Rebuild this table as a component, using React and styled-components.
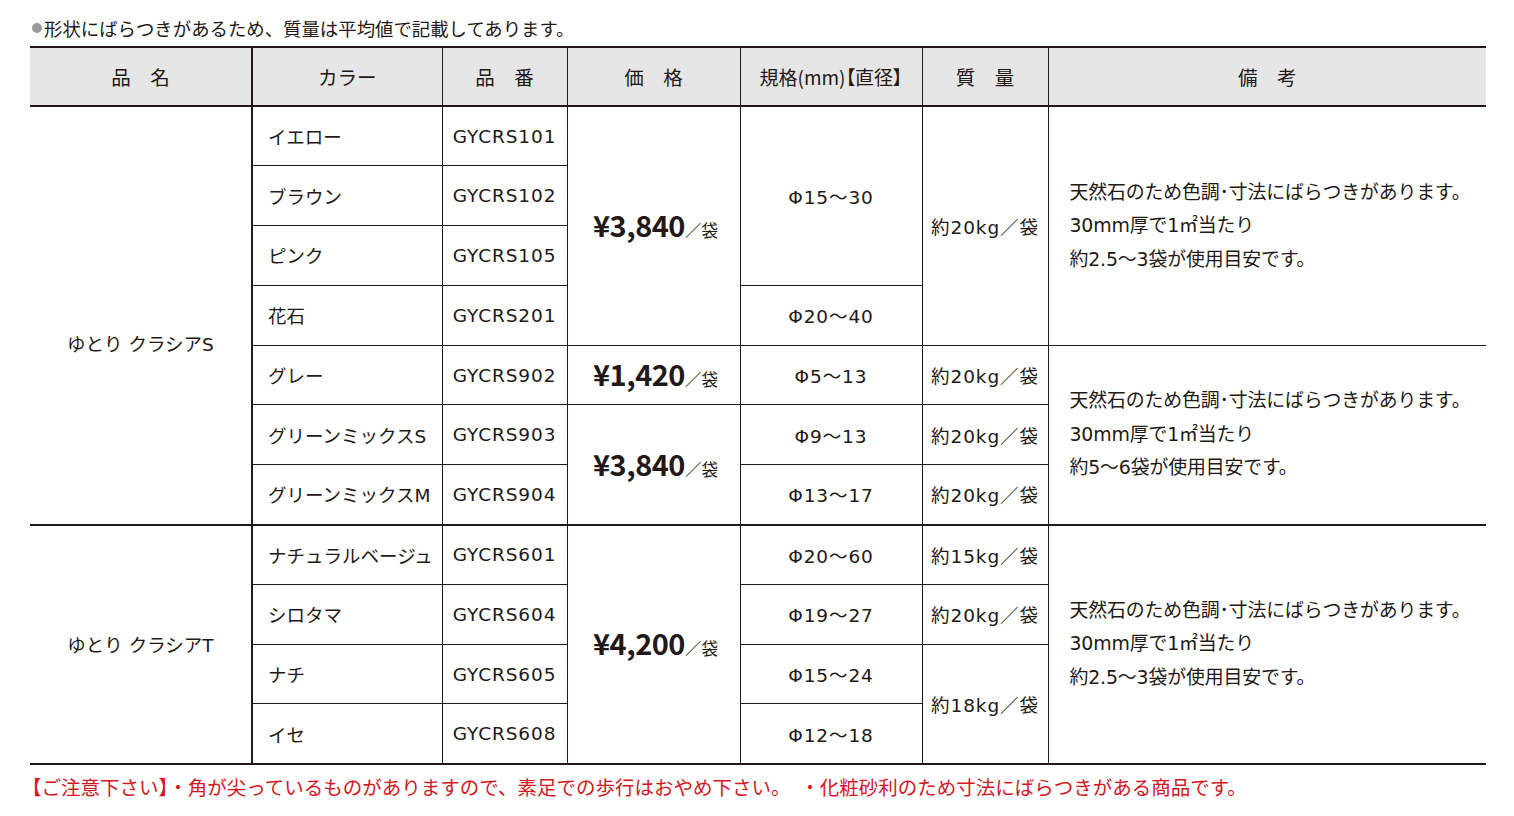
import React from "react";
import styled, { createGlobalStyle, css } from "styled-components";

const Global = createGlobalStyle`
  html, body { margin: 0; padding: 0; background: #ffffff; }
  body { font-family: "Noto Sans CJK JP", "Noto Sans", sans-serif; color: #231815; }
`;

const INK = "#231815";
const LATIN = `"DejaVu Sans", "Noto Sans CJK JP", sans-serif`;

const Page = styled.div`
  width: 1514px;
  padding: 18px 28px 0 30px;
  box-sizing: border-box;
`;

const Caption = styled.p`
  margin: 0 0 8px 2px;
  font-size: 18.4px;
  line-height: 20px;
  display: flex;
  align-items: center;
`;

const Dot = styled.span`
  display: inline-block;
  width: 10px;
  height: 10px;
  border-radius: 50%;
  background: #9a9a9a;
  margin-right: 2px;
`;

const Table = styled.table`
  width: 1456px;
  border-collapse: collapse;
  table-layout: fixed;
  border-top: 2px solid ${INK};
  border-bottom: 2px solid ${INK};
`;

const HeadRow = styled.tr`
  height: 59px;
  background: #e6e6e6;
`;

const BodyRow = styled.tr`
  height: 59.8px;
`;

const HeadCell = styled.th`
  font-weight: 400;
  font-size: 19.5px;
  text-align: center;
  padding: 0;
  border-bottom: 2px solid ${INK};
  border-left: ${(p) => (p.$first ? "none" : `${p.$thick ? 2 : 1}px solid ${INK}`)};
  white-space: nowrap;
  ${(p) =>
    p.$compact &&
    css`
      font-feature-settings: "palt";
      font-size: 19px;
    `}
`;

const Cell = styled.td`
  font-family: ${LATIN};
  font-size: 18.5px;
  padding: ${(p) => (p.$align === "left" ? `0 0 0 ${p.$pad ?? 15}px` : "0")};
  padding-top: ${(p) => (p.$lift ? `${p.$lift}px` : undefined)};
  text-align: ${(p) => p.$align || "center"};
  letter-spacing: ${(p) => (p.$code ? "0.9px" : "normal")};
  vertical-align: middle;
  white-space: nowrap;
  border-top: 1px solid ${INK};
  border-left: ${(p) => (p.$first ? "none" : `${p.$thick ? 2 : 1}px solid ${INK}`)};
  ${(p) =>
    p.$groupEnd &&
    css`
      border-bottom: 2px solid ${INK};
    `}
`;

const Note = styled.div`
  font-size: 18.9px;
  line-height: 33.5px;
  letter-spacing: -0.15px;
  white-space: nowrap;
`;

const Price = styled.span`
  display: inline-flex;
  align-items: baseline;
  padding: 0 0 4px 4px;
  font-family: "Noto Sans CJK JP", sans-serif;
  letter-spacing: normal;
`;

const Yen = styled.span`
  font-size: 29px;
  font-weight: 700;
  letter-spacing: -0.5px;
`;

const Unit = styled.span`
  font-size: 16.5px;
`;

const Footer = styled.p`
  margin: 12px 0 0 -8px;
  font-size: 19.5px;
  line-height: 20px;
  color: #d6161e;
  white-space: pre;
`;

const noteA = ["天然石のため色調･寸法にばらつきがあります。", "30mm厚で1㎡当たり", "約2.5〜3袋が使用目安です。"];
const noteB = ["天然石のため色調･寸法にばらつきがあります。", "30mm厚で1㎡当たり", "約5〜6袋が使用目安です。"];

const Remark = ({ lines }) => (
  <Note>
    {lines.map((l) => (
      <div key={l}>{l}</div>
    ))}
  </Note>
);

const PriceTag = ({ value }) => (
  <Price>
    <Yen>{value}</Yen>
    <Unit>／袋</Unit>
  </Price>
);

export default function App() {
  return (
    <Page>
      <Global />
      <Caption>
        <Dot />
        形状にばらつきがあるため、質量は平均値で記載してあります。
      </Caption>
      <Table>
        <colgroup>
          <col style={{ width: 222 }} />
          <col style={{ width: 190 }} />
          <col style={{ width: 125 }} />
          <col style={{ width: 173 }} />
          <col style={{ width: 182 }} />
          <col style={{ width: 126 }} />
          <col style={{ width: 438 }} />
        </colgroup>
        <thead>
          <HeadRow>
            <HeadCell $first>品　名</HeadCell>
            <HeadCell $thick>カラー</HeadCell>
            <HeadCell>品　番</HeadCell>
            <HeadCell>価　格</HeadCell>
            <HeadCell $compact>規格(mm)【直径】</HeadCell>
            <HeadCell>質　量</HeadCell>
            <HeadCell>備　考</HeadCell>
          </HeadRow>
        </thead>
        <tbody>
          <BodyRow>
            <Cell $first rowSpan={7} $groupEnd $lift={56}>ゆとり クラシアS</Cell>
            <Cell $thick $align="left">イエロー</Cell>
            <Cell $code>GYCRS101</Cell>
            <Cell rowSpan={4}><PriceTag value="¥3,840" /></Cell>
            <Cell $code rowSpan={3}>Φ15〜30</Cell>
            <Cell $code rowSpan={4}>約20kg／袋</Cell>
            <Cell rowSpan={4} $align="left" $pad={21}><Remark lines={noteA} /></Cell>
          </BodyRow>
          <BodyRow>
            <Cell $thick $align="left">ブラウン</Cell>
            <Cell $code>GYCRS102</Cell>
          </BodyRow>
          <BodyRow>
            <Cell $thick $align="left">ピンク</Cell>
            <Cell $code>GYCRS105</Cell>
          </BodyRow>
          <BodyRow>
            <Cell $thick $align="left">花石</Cell>
            <Cell $code>GYCRS201</Cell>
            <Cell $code>Φ20〜40</Cell>
          </BodyRow>
          <BodyRow>
            <Cell $thick $align="left">グレー</Cell>
            <Cell $code>GYCRS902</Cell>
            <Cell><PriceTag value="¥1,420" /></Cell>
            <Cell $code>Φ5〜13</Cell>
            <Cell $code>約20kg／袋</Cell>
            <Cell rowSpan={3} $align="left" $pad={21} $groupEnd><Remark lines={noteB} /></Cell>
          </BodyRow>
          <BodyRow>
            <Cell $thick $align="left">グリーンミックスS</Cell>
            <Cell $code>GYCRS903</Cell>
            <Cell rowSpan={2} $groupEnd><PriceTag value="¥3,840" /></Cell>
            <Cell $code>Φ9〜13</Cell>
            <Cell $code>約20kg／袋</Cell>
          </BodyRow>
          <BodyRow>
            <Cell $thick $align="left" $groupEnd>グリーンミックスM</Cell>
            <Cell $code $groupEnd>GYCRS904</Cell>
            <Cell $code $groupEnd>Φ13〜17</Cell>
            <Cell $code $groupEnd>約20kg／袋</Cell>
          </BodyRow>
          <BodyRow>
            <Cell $first rowSpan={4}>ゆとり クラシアT</Cell>
            <Cell $thick $align="left">ナチュラルベージュ</Cell>
            <Cell $code>GYCRS601</Cell>
            <Cell rowSpan={4}><PriceTag value="¥4,200" /></Cell>
            <Cell $code>Φ20〜60</Cell>
            <Cell $code>約15kg／袋</Cell>
            <Cell rowSpan={4} $align="left" $pad={21}><Remark lines={noteA} /></Cell>
          </BodyRow>
          <BodyRow>
            <Cell $thick $align="left">シロタマ</Cell>
            <Cell $code>GYCRS604</Cell>
            <Cell $code>Φ19〜27</Cell>
            <Cell $code>約20kg／袋</Cell>
          </BodyRow>
          <BodyRow>
            <Cell $thick $align="left">ナチ</Cell>
            <Cell $code>GYCRS605</Cell>
            <Cell $code>Φ15〜24</Cell>
            <Cell $code rowSpan={2}>約18kg／袋</Cell>
          </BodyRow>
          <BodyRow>
            <Cell $thick $align="left">イセ</Cell>
            <Cell $code>GYCRS608</Cell>
            <Cell $code>Φ12〜18</Cell>
          </BodyRow>
        </tbody>
      </Table>
      <Footer>{"【ご注意下さい】・角が尖っているものがありますので、素足での歩行はおやめ下さい。　・化粧砂利のため寸法にばらつきがある商品です。"}</Footer>
    </Page>
  );
}
